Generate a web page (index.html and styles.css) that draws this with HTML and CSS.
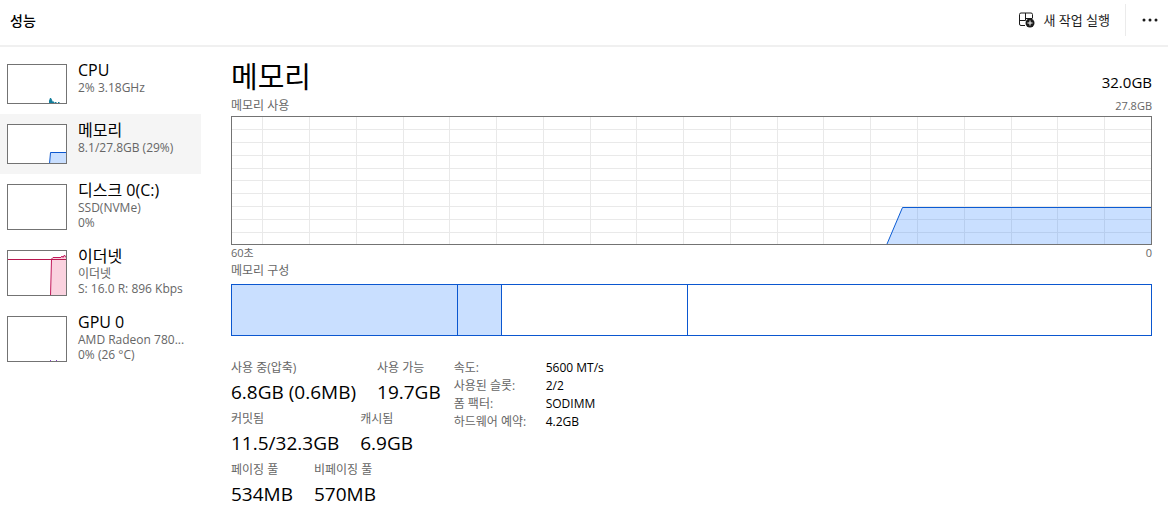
FILE: index.html
```html
<!DOCTYPE html>
<html lang="ko">
<head>
<meta charset="utf-8">
<title>성능</title>
<link rel="stylesheet" href="styles.css">
</head>
<body>
<header class="topbar">
  <h1 class="topbar-title">성능</h1>
  <div class="topbar-actions">
    <button class="run-task" type="button">
      <svg width="16" height="16" viewBox="0 0 16 16" fill="none" aria-hidden="true">
        <path d="M6 13.500H2a1.500 1.500 0 0 1-1.500-1.500V2.500A1.500 1.500 0 0 1 2 1H12a1.500 1.500 0 0 1 1.500 1.500V6M.5 8.500H6.500M6.500 1V8.500M6.500 6.500H13.500" stroke="#1b1b1b"/>
        <circle cx="11" cy="11" r="4.500" fill="#1b1b1b"/>
        <path d="M11 8.500v5M8.500 11h5" stroke="#fff"/>
      </svg>
      <span>새 작업 실행</span>
    </button>
    <button class="more" type="button" aria-label="더 보기">
      <svg width="16" height="4" viewBox="0 0 16 4" aria-hidden="true"><g fill="#1b1b1b"><circle cx="2" cy="2" r="1.500"/><circle cx="8" cy="2" r="1.500"/><circle cx="14" cy="2" r="1.500"/></g></svg>
    </button>
  </div>
</header>
<div class="layout">
  <nav class="resources">
    <button class="resource" type="button">
      <svg class="thumb" viewBox="0 0 58 38" aria-hidden="true"><path d="M41.500 38V36L42.500 33L44 36V37H46V38M47 37.500H48.500M50 37.500H51.500" fill="#117d9b" stroke="#117d9b"/></svg>
      <span class="resource-text"><span class="resource-name">CPU</span><span>2% 3.18GHz</span></span>
    </button>
    <button class="resource selected" type="button" aria-current="true">
      <svg class="thumb" viewBox="0 0 58 38" aria-hidden="true"><path d="M41.500 39L42.500 27.500H59V39Z" fill="#c9dfff" stroke="#0b57d0"/></svg>
      <span class="resource-text"><span class="resource-name">메모리</span><span>8.1/27.8GB (29%)</span></span>
    </button>
    <button class="resource" type="button">
      <svg class="thumb tall" viewBox="0 0 58 44" aria-hidden="true"></svg>
      <span class="resource-text"><span class="resource-name">디스크 0(C:)</span><span>SSD(NVMe)</span><span>0%</span></span>
    </button>
    <button class="resource" type="button">
      <svg class="thumb tall" viewBox="0 0 58 44" aria-hidden="true"><path d="M42.500 45L43.500 8L45 6.500H53L54 5L55 6.500L56.500 4L57.500 6H59V45Z" fill="#fad2df" stroke="#c2185b"/><path d="M0 8.500H58" stroke="#b8174f"/></svg>
      <span class="resource-text"><span class="resource-name">이더넷</span><span>이더넷</span><span>S: 16.0 R: 896 Kbps</span></span>
    </button>
    <button class="resource" type="button">
      <svg class="thumb tall" viewBox="0 0 58 44" aria-hidden="true"><path d="M42 43.500h1M48 43.500h1" stroke="#8b45c7"/></svg>
      <span class="resource-text"><span class="resource-name">GPU 0</span><span>AMD Radeon 780...</span><span>0% (26 °C)</span></span>
    </button>
  </nav>
  <main class="detail">
    <div class="detail-head"><h2>메모리</h2><span class="capacity">32.0GB</span></div>
    <div class="caption usage"><span class="usage-label">메모리 사용</span><span>27.8GB</span></div>
    <svg class="chart" viewBox="0 0 919 127" preserveAspectRatio="none" role="img" aria-label="메모리 사용">
      <path class="grid" d="M30.500 0V127M77.500 0V127M124.500 0V127M171.500 0V127M217.500 0V127M264.500 0V127M311.500 0V127M358.500 0V127M404.500 0V127M451.500 0V127M498.500 0V127M545.500 0V127M591.500 0V127M638.500 0V127M685.500 0V127M732.500 0V127M779.500 0V127M825.500 0V127M872.500 0V127M0 12.500H919M0 25.500H919M0 38.500H919M0 51.500H919M0 63.500H919M0 76.500H919M0 89.500H919M0 102.500H919M0 115.500H919"/>
      <path class="area" d="M655 127L670.500 90.500H919V127Z"/>
      <path class="line" d="M655 127L670.500 90.500H919"/>
    </svg>
    <div class="caption axis"><span>60초</span><span>0</span></div>
    <div class="caption composition-label">메모리 구성</div>
    <div class="composition">
      <span class="used"></span><span class="modified"></span><span class="standby"></span><span class="free"></span>
    </div>
    <div class="numbers">
      <div class="stats">
        <dl class="stat-row"><div><dt>사용 중(압축)</dt><dd>6.8GB (0.6MB)</dd></div><div><dt>사용 가능</dt><dd>19.7GB</dd></div></dl>
        <dl class="stat-row"><div><dt>커밋됨</dt><dd>11.5/32.3GB</dd></div><div><dt>캐시됨</dt><dd>6.9GB</dd></div></dl>
        <dl class="stat-row"><div><dt>페이징 풀</dt><dd>534MB</dd></div><div><dt>비페이징 풀</dt><dd>570MB</dd></div></dl>
      </div>
      <table class="specs">
        <tr><th scope="row">속도:</th><td>5600 MT/s</td></tr>
        <tr><th scope="row">사용된 슬롯:</th><td>2/2</td></tr>
        <tr><th scope="row">폼 팩터:</th><td>SODIMM</td></tr>
        <tr><th scope="row">하드웨어 예약:</th><td>4.2GB</td></tr>
      </table>
    </div>
  </main>
</div>
</body>
</html>
```
FILE: styles.css
```css
* { box-sizing: border-box; }
body {
  margin: 0;
  background: #fff;
  color: #000;
  font: 12px/16px "Open Sans", "Noto Sans CJK KR", sans-serif;
}
h1, h2, dl, dd { margin: 0; }
button { border: 0; padding: 0; background: none; color: inherit; font: inherit; text-align: left; }
svg { display: block; flex: none; }

.topbar {
  display: flex;
  justify-content: space-between;
  height: 47px;
  padding: 4px 10px 0 10px;
  border-bottom: 2px solid #f0f0f0;
}
.topbar-title { font-size: 14px; line-height: 34px; font-weight: 500; }
.topbar-actions { display: flex; height: 32px; }
.run-task { display: flex; align-items: center; gap: 8px; padding-right: 15px; color: #1b1b1b; font-size: 13px; }
.more { display: flex; align-items: center; padding-left: 16px; border-left: 1px solid #ebebeb; }

.layout { display: flex; align-items: flex-start; }
.resources { flex: none; width: 201px; padding-top: 7px; }
.resource {
  display: flex;
  align-items: flex-start;
  gap: 11px;
  width: 100%;
  padding: 6px 0 10px 7px;
  color: #666;
  line-height: 15px;
  white-space: nowrap;
}
.selected { background: #f5f5f5; }
.thumb { width: 60px; height: 40px; margin-top: 4px; border: 1px solid #737373; background: #fff; fill: none; }
.tall { height: 46px; }
.resource-text { display: flex; flex-direction: column; }
.resource-name { color: #000; font-size: 16px; line-height: 20px; }

.detail { flex: 1; min-width: 0; padding: 12px 16px 10px 30px; }
.detail-head { display: flex; justify-content: space-between; align-items: flex-end; }
h2 { font-size: 29px; line-height: 36px; font-weight: 400; }
.capacity { font-size: 15px; line-height: 26px; }
.caption { display: flex; justify-content: space-between; color: #666; }
.usage { line-height: 21px; font-size: 11px; }
.usage-label { font-size: 12px; }
.chart { width: 100%; height: 129px; border: 1px solid #737373; }
.chart path { vector-effect: non-scaling-stroke; fill: none; }
.chart .grid { stroke: #e9e9e9; }
.chart .area { fill: rgba(11, 108, 255, 0.22); }
.chart .line { stroke: #0b5bd3; }
.axis { line-height: 16px; font-size: 11px; }
.composition-label { line-height: 20px; font-size: 12px; }
.composition { display: flex; height: 52px; margin-top: 3px; border: 1px solid #0b57d0; }
.composition span + span { border-left: 1px solid #0b57d0; }
.used { flex: 226; background: #c9dfff; }
.modified { flex: 43; background: #c9dfff; }
.standby { flex: 185; }
.free { flex: 465; }

.numbers { display: flex; align-items: flex-start; gap: 13px; margin-top: 21px; }
.stats { display: flex; flex-direction: column; gap: 3px; }
.stat-row { display: flex; gap: 21px; white-space: nowrap; }
dt { color: #666; line-height: 22px; }
dd { font-size: 19px; line-height: 26px; }
.specs { border-collapse: collapse; margin-top: 2px; line-height: 18px; }
.specs th, .specs td { padding: 0; font-weight: 400; text-align: left; white-space: nowrap; }
.specs th { min-width: 92px; color: #666; }
```
